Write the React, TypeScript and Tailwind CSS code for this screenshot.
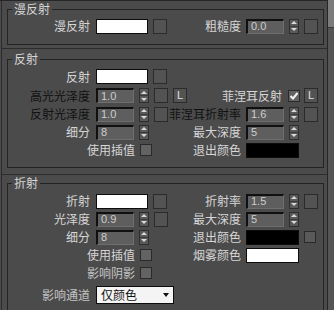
import type { ReactNode } from "react";

const LIGHT = "text-[#d6d6d6]";
const DARK = "text-[#111111]";

function Swatch({ color, w = 52 }: { color: string; w?: number }) {
  return (
    <div
      className="h-[15px] border border-[#0c0c0c] shrink-0"
      style={{ width: w, background: color }}
    />
  );
}

function MapBtn() {
  return <div className="w-[14px] h-[15px] shrink-0 border border-[#2b2b2b] bg-[#535353]" />;
}

function LBtn() {
  return (
    <div className="w-[14px] h-[15px] shrink-0 border border-[#2b2b2b] bg-[#535353] flex items-center justify-center text-[11px] leading-none text-[#e0e0e0] font-['Liberation_Sans',sans-serif]">
      L
    </div>
  );
}

function Arrows() {
  return (
    <div className="w-[10px] h-[15px] shrink-0 border border-[#2e2e2e] bg-[#595959] flex flex-col">
      <div className="flex-1 flex items-center justify-center border-b border-[#3a3a3a]">
        <div className="w-0 h-0 border-x-[3px] border-x-transparent border-b-[3px] border-b-[#d8d8d8]" />
      </div>
      <div className="flex-1 flex items-center justify-center">
        <div className="w-0 h-0 border-x-[3px] border-x-transparent border-t-[3px] border-t-[#d8d8d8]" />
      </div>
    </div>
  );
}

function Spinner({ value }: { value: string }) {
  return (
    <div className="flex items-center gap-[5px] shrink-0">
      <div className="w-[38px] h-[15px] border-t-2 border-l-2 border-t-[#101010] border-l-[#101010] border-r border-b border-r-[#6e6e6e] border-b-[#6e6e6e] bg-[#5e5e5e] pl-[3px] flex items-center text-[11px] leading-none text-[#cdcdcd] font-['Liberation_Sans',sans-serif]">
        {value}
      </div>
      <Arrows />
    </div>
  );
}

function Check({ checked = false }: { checked?: boolean }) {
  return (
    <div className="w-[12px] h-[12px] shrink-0 border border-[#2a2a2a] bg-[#636363] flex items-center justify-center">
      {checked && (
        <svg width="10" height="10" viewBox="0 0 10 10">
          <path d="M1.5 5 L4 7.5 L8.5 2" stroke="#f2f2f2" strokeWidth="2" fill="none" />
        </svg>
      )}
    </div>
  );
}

function Label({ children, dark = false, dim = false }: { children: ReactNode; dark?: boolean; dim?: boolean }) {
  return (
    <span
      className={`whitespace-nowrap text-[12px] leading-[14px] ${dark ? DARK : dim ? "text-[#c4c4c4]" : LIGHT}`}
    >
      {children}
    </span>
  );
}

function Row({
  h,
  label,
  left,
  rlabel,
  right,
  rightFree = false,
}: {
  h: string;
  label?: ReactNode;
  left?: ReactNode;
  rlabel?: ReactNode;
  right?: ReactNode;
  rightFree?: boolean;
}) {
  return (
    <div className={`flex items-center ${h} pr-[5px]`}>
      <div className="w-[82px] shrink-0 flex justify-end">{label}</div>
      <div className="ml-[6px] flex items-center gap-[5px]">{left}</div>
      {rightFree ? (
        <div className="flex-1 flex items-center justify-end">{right}</div>
      ) : (
        <>
          <div className="flex-1 flex justify-end">{rlabel}</div>
          <div className="ml-[5px] w-[72px] shrink-0 flex items-center gap-[5px]">{right}</div>
        </>
      )}
    </div>
  );
}

function Group({ title, className, children }: { title: string; className: string; children: ReactNode }) {
  return (
    <fieldset className={`ml-[5px] mr-[3px] border border-[#242424] ${className}`}>
      <legend className={`ml-[4px] px-[2px] text-[12px] leading-[14px] ${LIGHT}`}>{title}</legend>
      {children}
    </fieldset>
  );
}

export default function App() {
  return (
    <div className="w-[334px] h-[310px] overflow-hidden bg-[#4b4b4b] flex font-['Noto_Sans_CJK_SC','Noto_Sans',sans-serif]">
      <div className="w-[328px] shrink-0 border-t border-r border-[#262626] flex flex-col pl-[1px]">
        <div className="border-l border-[#2c2c2c] pt-[1px] pb-[3px]">
          <Group title="漫反射" className="pt-[1px] pb-[9px]">
            <Row
              h="h-[18px]"
              label={<Label>漫反射</Label>}
              left={
                <>
                  <Swatch color="#ffffff" />
                  <MapBtn />
                </>
              }
              rlabel={<Label>粗糙度</Label>}
              right={
                <>
                  <Spinner value="0.0" />
                  <MapBtn />
                </>
              }
            />
          </Group>
        </div>

        <div className="border-l border-t border-[#2c2c2c] pt-[3px] pb-[6px]">
          <Group title="反射" className="pt-[1px] pb-[8px]">
            <Row
              h="h-[19px]"
              label={<Label>反射</Label>}
              left={
                <>
                  <Swatch color="#ffffff" />
                  <MapBtn />
                </>
              }
            />
            <Row
              h="h-[19px]"
              label={<Label dark>高光光泽度</Label>}
              left={
                <>
                  <Spinner value="1.0" />
                  <MapBtn />
                  <LBtn />
                </>
              }
              rightFree
              right={
                <>
                  <Label>菲涅耳反射</Label>
                  <div className="ml-[6px]">
                    <Check checked />
                  </div>
                  <div className="ml-[4px]">
                    <LBtn />
                  </div>
                </>
              }
            />
            <Row
              h="h-[18px]"
              label={<Label dark>反射光泽度</Label>}
              left={
                <>
                  <Spinner value="1.0" />
                  <MapBtn />
                </>
              }
              rlabel={<Label dark>菲涅耳折射率</Label>}
              right={
                <>
                  <Spinner value="1.6" />
                  <MapBtn />
                </>
              }
            />
            <Row
              h="h-[18px]"
              label={<Label>细分</Label>}
              left={<Spinner value="8" />}
              rlabel={<Label>最大深度</Label>}
              right={<Spinner value="5" />}
            />
            <Row
              h="h-[18px]"
              label={<span />}
              left={
                <div className="-ml-[9px] flex items-center gap-[5px]">
                  <Label>使用插值</Label>
                  <Check />
                </div>
              }
              rlabel={<Label>退出颜色</Label>}
              right={<Swatch color="#000000" w={53} />}
            />
          </Group>
        </div>

        <div className="border-l border-t border-[#2c2c2c] pt-[1px] flex-1">
          <Group title="折射" className="pt-[2px] pb-[8px]">
            <Row
              h="h-[18px]"
              label={<Label>折射</Label>}
              left={
                <>
                  <Swatch color="#ffffff" />
                  <MapBtn />
                </>
              }
              rlabel={<Label>折射率</Label>}
              right={
                <>
                  <Spinner value="1.5" />
                  <MapBtn />
                </>
              }
            />
            <Row
              h="h-[18px]"
              label={<Label>光泽度</Label>}
              left={
                <>
                  <Spinner value="0.9" />
                  <MapBtn />
                </>
              }
              rlabel={<Label>最大深度</Label>}
              right={<Spinner value="5" />}
            />
            <Row
              h="h-[18px]"
              label={<Label>细分</Label>}
              left={<Spinner value="8" />}
              rlabel={<Label>退出颜色</Label>}
              right={
                <>
                  <Swatch color="#000000" w={53} />
                  <div className="w-[12px] h-[12px] border border-[#2a2a2a] bg-[#5a5a5a]" />
                </>
              }
            />
            <Row
              h="h-[18px]"
              label={<span />}
              left={
                <div className="-ml-[9px] flex items-center gap-[5px]">
                  <Label>使用插值</Label>
                  <Check />
                </div>
              }
              rlabel={<Label>烟雾颜色</Label>}
              right={<Swatch color="#ffffff" w={53} />}
            />
            <Row
              h="h-[17px]"
              label={<span />}
              left={
                <div className="-ml-[9px] flex items-center gap-[5px]">
                  <Label dim>影响阴影</Label>
                  <Check />
                </div>
              }
            />
            <Row
              h="h-[28px]"
              label={<Label dim>影响通道</Label>}
              left={
                <div className="w-[78px] h-[18px] border border-[#0c0c0c] bg-[#f4f4f4] flex items-center justify-between pl-[4px] pr-[4px]">
                  <span className="text-[12px] leading-none text-[#111]">仅颜色</span>
                  <div className="w-0 h-0 border-x-[3px] border-x-transparent border-t-[4px] border-t-[#111]" />
                </div>
              }
            />
          </Group>
        </div>
      </div>
      <div className="flex-1 bg-[#555555] flex flex-col">
        <div className="h-[28px] bg-[#7c7c7c] border-b border-[#3a3a3a]" />
      </div>
    </div>
  );
}
